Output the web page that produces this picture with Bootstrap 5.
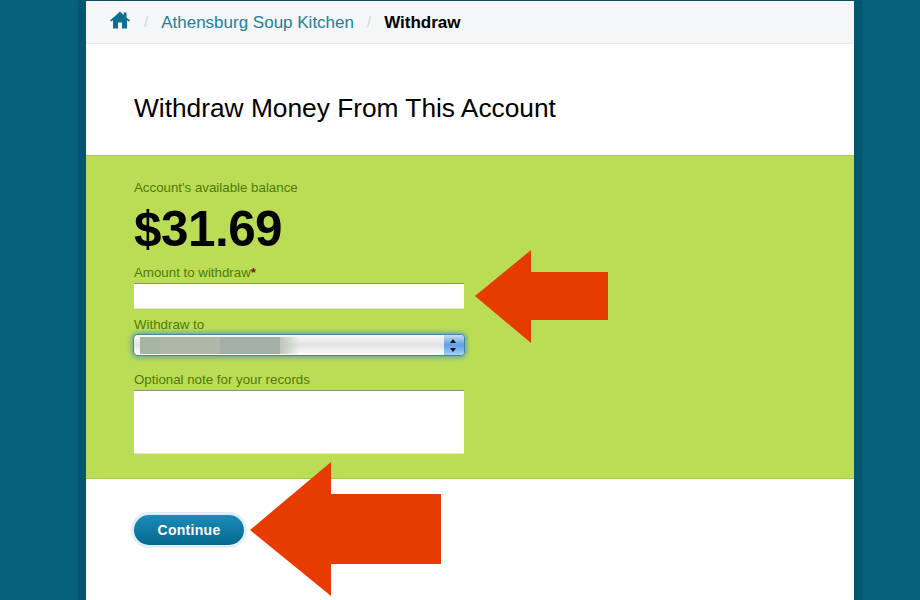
<!DOCTYPE html>
<html lang="en">
<head>
    <meta charset="UTF-8">
    <meta name="viewport" content="width=device-width, initial-scale=1.0">
    <title>Withdraw</title>
    <link href="https://cdn.jsdelivr.net/npm/bootstrap@5.3.2/dist/css/bootstrap.min.css" rel="stylesheet">
    <style>
        html, body { height: 100%; }
        body {
            background: #05607c;
            font-family: "Liberation Sans", Arial, sans-serif;
            overflow: hidden;
        }
        .page-sheet {
            position: relative;
            width: 768px;
            height: 600px;
            margin-left: 86px;
            background: #fff;
            box-shadow: -8px 0 0 #03566f, 8px 0 0 #03566f;
        }
        .crumbs {
            height: 44px;
            padding: 1px 0 0 24px;
            background: #f4f6f8;
            border-top: 1px solid #0a4f66;
            border-bottom: 1px solid #e8eaec;
            font-size: 17px;
        }
        .crumbs a { color: #237f9c; text-decoration: none; }
        .crumbs .home-link { margin: 0 1px 6px 0; }
        .crumbs .sep { color: #d3d6d9; margin: 0 13px; font-size: 15px; }
        .crumbs .here { color: #000; font-weight: 700; font-size: 17px; }
        .page-title {
            height: 111px;
            padding: 49px 0 0 48px;
            margin: 0;
            font-size: 26.3px;
            line-height: 30px;
            font-weight: 400;
            color: #000;
        }
        .green-band {
            height: 324px;
            padding: 25px 48px 0;
            background: #bbdd55;
            border-top: 1px solid #a6c64c;
            border-bottom: 1px solid #a6c64c;
        }
        .field-label {
            display: block;
            margin: 0;
            padding-bottom: 2px;
            font-size: 13.3px;
            line-height: 13px;
            color: #4f7a05;
        }
        .field-label b { color: #8a1010; }
        .balance {
            margin: 7px 0 11px;
            font-size: 49.4px;
            line-height: 52px;
            font-weight: 700;
            color: #000;
            letter-spacing: -.5px;
        }
        .plain-input {
            display: block;
            width: 330px;
            background: #fff;
            border: 0;
            border-top: 1px solid #8b9480;
            border-bottom: 1px solid #dfe8cf;
            border-radius: 0;
            outline: 0;
        }
        .amount-input { height: 26px; margin-top: 2px; margin-bottom: 9px; }
        .note-input { height: 64px; margin-top: 2px; resize: none; }
        .fake-select {
            position: relative;
            width: 330px;
            height: 20px;
            margin: 2px 0 18px;
            border-radius: 4px;
            background: linear-gradient(#f8f8f8, #e2e2e2 50%, #fff);
            box-shadow: 0 0 0 1px #3f86a8, 0 0 4px 3px rgba(70,150,190,.7);
            overflow: hidden;
        }
        .fake-select .blurred {
            position: absolute;
            left: 6px;
            top: 2px;
            width: 160px;
            height: 17px;
            background: linear-gradient(90deg, #a6b4a2 0 20px, #adb8a8 20px 80px, #a4afa6 80px 140px, #bcc6ba 140px, rgba(205,212,205,0) 160px);
        }
        .fake-select .spin {
            position: absolute;
            right: 0;
            top: 0;
            width: 20px;
            height: 20px;
            background: linear-gradient(#c4def5, #5f9fe0 50%, #a4d0f5);
        }
        .fake-select .spin::before, .fake-select .spin::after {
            content: "";
            position: absolute;
            left: 6px;
            border-left: 3.5px solid transparent;
            border-right: 3.5px solid transparent;
        }
        .fake-select .spin::before { top: 4px; border-bottom: 4px solid #111; }
        .fake-select .spin::after { bottom: 3px; border-top: 4px solid #111; }
        .continue-wrap { padding: 36px 0 0 48px; }
        .continue-btn {
            width: 110px;
            height: 30px;
            padding: 0;
            border: 0;
            border-radius: 15px;
            background: linear-gradient(#1a8cb8, #06688f);
            box-shadow: 0 0 0 3px #e0eff5;
            color: #fff;
            font-size: 14px;
            font-weight: 700;
            letter-spacing: .3px;
        }
        .continue-btn:hover { background: #06688f; color: #fff; }
        .arrow-over { position: absolute; left: 0; top: 0; pointer-events: none; }
    </style>
</head>
<body>
    <div class="page-sheet">
        <div class="crumbs d-flex align-items-center">
            <a href="#" aria-label="Home" class="home-link d-flex">
                <svg width="20" height="18" viewBox="0 0 20 18"><path fill="#0f6f93" d="M10 0.5 L0 9.5 L1.2 10.6 L3 9.2 V17.5 H8 V11.5 H12 V17.5 H17 V9.2 L18.8 10.6 L20 9.5 L16.5 6.4 V1.5 H13.8 V4 Z"/></svg>
            </a>
            <span class="sep">/</span>
            <a href="#">Athensburg Soup Kitchen</a>
            <span class="sep">/</span>
            <span class="here">Withdraw</span>
        </div>

        <h1 class="page-title">Withdraw Money From This Account</h1>

        <form class="green-band">
            <label class="field-label">Account's available balance</label>
            <div class="balance">$31.69</div>
            <label class="field-label" for="amount">Amount to withdraw<b>*</b></label>
            <input class="plain-input amount-input" id="amount" type="text">
            <label class="field-label">Withdraw to</label>
            <div class="fake-select"><span class="blurred"></span><span class="spin"></span></div>
            <label class="field-label" for="note">Optional note for your records</label>
            <textarea class="plain-input note-input" id="note"></textarea>
        </form>

        <div class="continue-wrap">
            <button type="button" class="btn continue-btn">Continue</button>
        </div>

        <svg class="arrow-over" width="768" height="600" viewBox="0 0 768 600">
            <polygon fill="#e73c00" points="389,296 445,250 445,272 522,272 522,320 445,320 445,343"/>
            <polygon fill="#e73c00" points="164,530 245,462 245,494 355,494 355,564 245,564 245,596"/>
        </svg>
    </div>

    <script src="https://cdn.jsdelivr.net/npm/bootstrap@5.3.2/dist/js/bootstrap.bundle.min.js"></script>
</body>
</html>
